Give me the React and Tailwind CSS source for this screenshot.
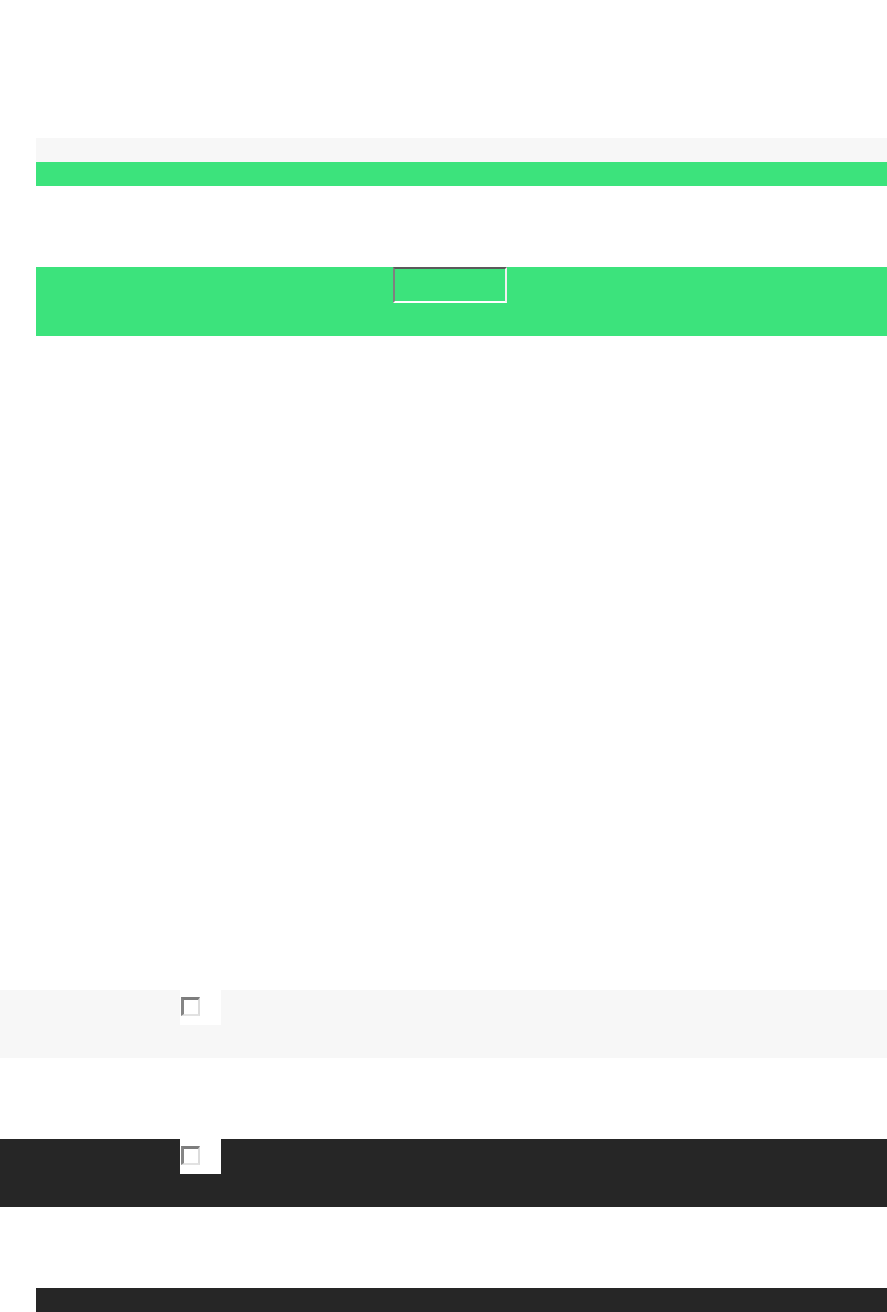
import React from 'react';

const Check = () => (
  <div className="w-[41px] h-[35px] bg-white pt-[7px] pl-[1px]">
    <div className="w-[19px] h-[19px] bg-white border-2 border-t-[3px] border-l-[3px] border-t-[#7d7d7d] border-l-[#858585] border-b-[#e2e2e2] border-r-[#dcdcdc]" />
  </div>
);

const App = () => {
  return (
    <div className="min-h-screen bg-white w-[887px] overflow-hidden">
      <div className="pt-[138px] pl-9">
        <div className="h-6 bg-[#f7f7f7]" />
        <div className="h-6 bg-[#3ce37c]" />
      </div>

      <div className="pt-[81px] pl-9">
        <div className="h-[69px] bg-[#3ce37c] pl-[357px]">
          <button className="block w-[114px] h-9 bg-[#3ce37c] border-2 border-t-[#5a5a5a] border-l-[#808080] border-b-white border-r-[#f0f0f0]" />
        </div>
      </div>

      <div className="mt-[654px] h-[68px] bg-[#f7f7f7] pl-[180px]">
        <Check />
      </div>

      <div className="mt-[81px] h-[68px] bg-[#262626] pl-[180px]">
        <Check />
      </div>

      <div className="pt-[81px] pl-9">
        <div className="h-6 bg-[#262626]" />
      </div>
    </div>
  );
};

export default App;
